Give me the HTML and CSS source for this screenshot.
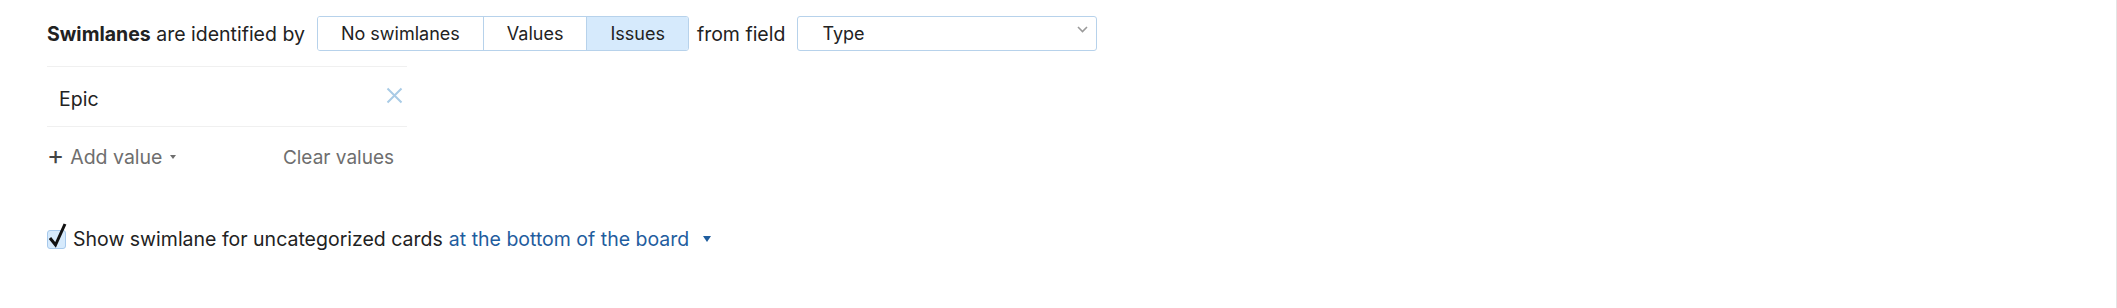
FILE: index.html
```html
<!DOCTYPE html>
<html lang="en">
<head>
    <meta charset="UTF-8">
    <meta name="viewport" content="width=device-width, initial-scale=1.0">
    <title>Board settings - Swimlanes</title>
    <link rel="stylesheet" href="styles.css">
</head>
<body>
    <div class="settings">
        <div class="row-top">
            <span class="label"><b>Swimlanes</b> are identified by</span>
            <div class="btn-group">
                <button class="seg">No swimlanes</button>
                <button class="seg">Values</button>
                <button class="seg active">Issues</button>
            </div>
            <span class="label">from field</span>
            <div class="select">
                <span>Type</span>
                <svg class="chev" width="11" height="7" viewBox="0 0 11 7"><path d="M1 1 L5.5 5.5 L10 1" fill="none" stroke="#9a9a9a" stroke-width="1.6"/></svg>
            </div>
        </div>

        <div class="values">
            <div class="value-item">
                <span>Epic</span>
                <svg class="remove" width="17" height="17" viewBox="0 0 17 17"><path d="M1.5 1.5 L15.5 15.5 M15.5 1.5 L1.5 15.5" stroke="#a9cbe6" stroke-width="2"/></svg>
            </div>
            <div class="value-actions">
                <span class="add"><span class="plus">+</span>Add value<span class="caret-sm"></span></span>
                <span class="clear">Clear values</span>
            </div>
        </div>

        <div class="uncat">
            <span class="check">
                <svg width="22" height="28" viewBox="0 0 22 28"><path d="M3 17 L8.5 24 L18 3" fill="none" stroke="#111" stroke-width="3"/></svg>
            </span>
            <span>Show swimlane for uncategorized cards</span>
            <a class="link">at the bottom of the board</a>
            <span class="caret"></span>
        </div>
    </div>
</body>
</html>
```
FILE: styles.css
```css
body {
    margin: 0;
    font-family: Inter, "Noto Sans", sans-serif;
    color: #222;
    background: #fff;
    height: 308px;
    box-sizing: border-box;
    border-right: 1px solid #e4e4e4;
}
.settings {
    padding: 16px 0 0 47px;
}
.row-top {
    display: flex;
    align-items: center;
    height: 35px;
}
.label {
    font-size: 19.5px;
}
.label b {
    font-weight: 700;
}
.btn-group {
    display: flex;
    height: 35px;
    border: 1px solid #b7d2eb;
    border-radius: 3px;
    box-sizing: border-box;
    margin: 0 8px 0 12px;
    overflow: hidden;
}
.seg {
    font-family: inherit;
    font-size: 18px;
    color: #222;
    background: #fff;
    border: none;
    border-left: 1px solid #b7d2eb;
    padding: 0 23px;
    cursor: pointer;
}
.seg:first-child {
    border-left: none;
}
.seg.active {
    background: #d6eafc;
}
.select {
    width: 300px;
    height: 35px;
    margin-left: 12px;
    box-sizing: border-box;
    border: 1px solid #b7d2eb;
    border-radius: 3px;
    display: flex;
    align-items: center;
    justify-content: space-between;
    padding: 0 8px 0 24px;
    font-size: 18px;
}
.chev {
    margin-top: -8px;
}
.values {
    width: 360px;
    margin-top: 15px;
}
.value-item {
    border-top: 1px solid #f0f0f0;
    border-bottom: 1px solid #f0f0f0;
    height: 61px;
    box-sizing: border-box;
    display: flex;
    align-items: center;
    justify-content: space-between;
    padding: 5px 4px 0 12px;
    font-size: 19.5px;
}
.remove {
    margin-top: -7px;
}
.value-actions {
    display: flex;
    justify-content: space-between;
    align-items: center;
    height: 60px;
    padding: 0 13px 0 0;
    font-size: 19.5px;
    color: #6e6e6e;
}
.add {
    display: flex;
    align-items: center;
}
.plus {
    font-size: 26px;
    line-height: 20px;
    color: #444;
    margin: -4px 6px 0 0;
}
.caret-sm {
    display: inline-block;
    border-left: 3px solid transparent;
    border-right: 3px solid transparent;
    border-top: 4px solid #6e6e6e;
    margin-left: 8px;
}
.clear {
    font-size: 19px;
}
.uncat {
    display: flex;
    align-items: center;
    margin-top: 40px;
    font-size: 19.5px;
    gap: 6px;
}
.check {
    position: relative;
    width: 19px;
    height: 19px;
    box-sizing: border-box;
    border: 1px solid #a7c9ec;
    background: #d6eafc;
    border-radius: 3px;
    margin-right: 1px;
}
.check svg {
    position: absolute;
    left: -1px;
    top: -10px;
}
.link {
    color: #1f5d9e;
    cursor: pointer;
}
.caret {
    display: inline-block;
    border-left: 4px solid transparent;
    border-right: 4px solid transparent;
    border-top: 6px solid #1f5d9e;
    margin-left: 8px;
}
```
